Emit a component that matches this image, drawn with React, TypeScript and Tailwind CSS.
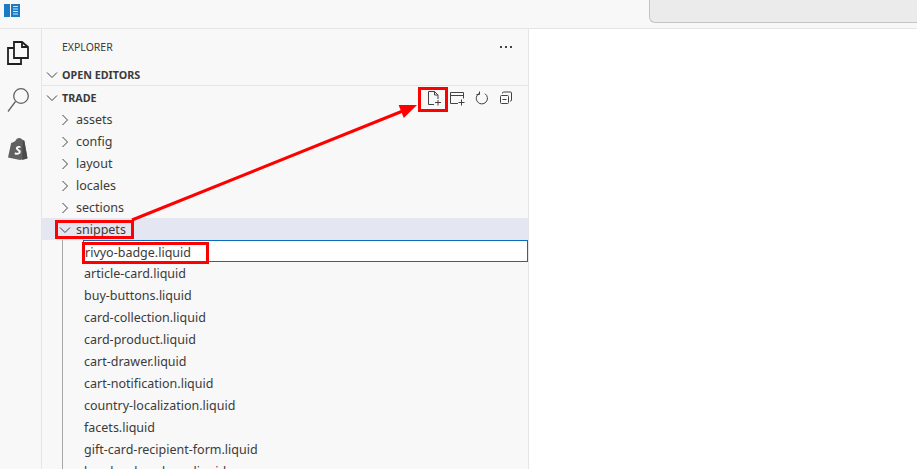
import React from "react";

const font = { fontFamily: '"Noto Sans", "Open Sans", sans-serif' };

function Chevron({ open }: { open?: boolean }) {
  return (
    <svg width="16" height="16" viewBox="0 0 16 16" fill="none" stroke="#424242" strokeWidth="1" className="mt-[1px] shrink-0">
      {open ? <path d="M3 5.500l5 5 5-5" /> : <path d="M5.500 3l5 5-5 5" />}
    </svg>
  );
}

function Folder({ name, open, active }: { name: string; open?: boolean; active?: boolean }) {
  return (
    <div className={`flex h-[22px] items-center pl-[15px] ${active ? "bg-[#e4e6f1]" : ""}`}>
      <Chevron open={open} />
      <span className="ml-[3px] pt-[2px] text-[12.5px] text-[#3b3b3b]">{name}</span>
    </div>
  );
}

function Section({ name, border }: { name: string; border?: boolean }) {
  return (
    <div className={`flex h-[22px] items-center pl-[2px] ${border ? "border-b border-[#e5e5e5]" : ""}`}>
      <Chevron open />
      <span className="ml-[2px] pt-[2px] text-[10.75px] font-bold text-[#3b3b3b]">{name}</span>
    </div>
  );
}

const files = [
  "article-card.liquid",
  "buy-buttons.liquid",
  "card-collection.liquid",
  "card-product.liquid",
  "cart-drawer.liquid",
  "cart-notification.liquid",
  "country-localization.liquid",
  "facets.liquid",
  "gift-card-recipient-form.liquid",
  "header-dropdown.liquid",
];

function Annotations() {
  return (
    <svg className="pointer-events-none absolute left-0 top-0" width="917" height="469" viewBox="0 0 917 469" fill="none">
      <rect x="419.500" y="88.500" width="27" height="22" stroke="#ff0000" strokeWidth="3" />
      <rect x="56.500" y="221.500" width="76" height="16" stroke="#ff0000" strokeWidth="3" />
      <rect x="83.500" y="243.500" width="124" height="19" stroke="#ff0000" strokeWidth="3" />
      <path d="M132 220L404 110.500" stroke="#ff0000" strokeWidth="3" />
      <path d="M417 105L398.600 104.900L403.800 117.900Z" fill="#ff0000" />
    </svg>
  );
}

export default function App() {
  return (
    <div className="relative flex h-[469px] w-[917px] flex-col overflow-hidden bg-white" style={font}>
      <div className="flex h-[29px] shrink-0 items-start border-b border-[#e5e5e5] bg-[#f8f8f8]">
        <svg width="16" height="13" viewBox="0 0 16 13" className="ml-[4px] mt-[4px]">
          <rect x="0" y="0" width="6" height="13" fill="#1a7ac4" />
          <rect x="7" y="0" width="9" height="13" fill="#1a7ac4" />
          <path d="M9 2.500h5M9 5h5M9 7.500h5M9 10h5" stroke="#cfe6f7" strokeWidth="1" />
        </svg>
        <div className="ml-[629px] h-[23px] flex-1 rounded-bl-[6px] border-b border-l border-[#c4c4c4] bg-[#ebebeb]" />
      </div>
      <div className="flex min-h-0 flex-1">
        <div className="flex w-[42px] shrink-0 flex-col items-center border-r border-[#e5e5e5] bg-[#f8f8f8] pt-[12px]">
          <svg width="22" height="24" viewBox="0 0 22 24" fill="none" strokeWidth="1.800" className="-ml-[6px]">
            <path d="M7 1h8l6 5v11H7z" stroke="#1f1f1f" />
            <path d="M15 1v5h6" stroke="#1f1f1f" />
            <path d="M7 7H1v16h13v-6" stroke="#1f1f1f" />
          </svg>
          <svg width="22" height="24" viewBox="0 0 22 24" fill="none" stroke="#616161" strokeWidth="1.300" className="mt-[23px] -ml-[5px]">
            <circle cx="14" cy="8" r="7.300" />
            <path d="M8.500 13.500L1 23.500" />
          </svg>
          <svg width="20" height="23" viewBox="1 0 19 23" preserveAspectRatio="none" className="mt-[25px] -ml-[5px]">
            <path d="M1 20.500L4 6c2-1 3-1 4-2 1-3 4-4 6-2l1 1 1.500 .5 3 17.500-7 2z" fill="#616161" />
            <path d="M15 3.500l1.500 .5 3 17.500-5 1.500z" fill="#4a4a4a" />
            <path d="M13 9.500c-2-1-5 0-4.500 2.200.4 1.600 2.800 1.800 2.600 3.300-.2 1.200-2 1-3.400 .2l-.5 2c2 1 5.500 .8 5.900-2.200.3-2.300-2.800-2.600-2.600-3.700.1-.8 1.400-.8 2.200-.3z" fill="#f8f8f8" />
          </svg>
        </div>
        <div className="flex w-[487px] shrink-0 flex-col border-r border-[#e5e5e5] bg-[#f8f8f8]">
          <div className="flex h-[35px] shrink-0 items-center justify-between pl-[20px] pr-[16px]">
            <span className="pt-[2px] text-[10.5px] text-[#3b3b3b]">EXPLORER</span>
            <svg width="12" height="2" viewBox="0 0 12 2" fill="#424242">
              <rect x="0" y="0" width="2" height="2" />
              <rect x="5" y="0" width="2" height="2" />
              <rect x="10" y="0" width="2" height="2" />
            </svg>
          </div>
          <Section name="OPEN EDITORS" border />
          <div className="relative flex h-[22px] items-center">
            <div className="flex-1"><Section name="TRADE" /></div>
            <div className="absolute left-[384px] top-[4px] flex items-center gap-[8px]">
              <svg width="16" height="16" viewBox="0 0 16 16" fill="none" stroke="#424242">
                <path d="M8 14.500H2.500v-13h6l3.500 3.500v4M8.500 1.500V5H12M12 10v5.500M9 12.500h6" />
              </svg>
              <svg width="16" height="16" viewBox="0 0 16 16" fill="none" stroke="#424242">
                <path d="M8 13.500H.5v-11h13v6M.5 5.500h13M11.500 9.500v6M8.500 12.500h6" />
              </svg>
              <svg width="16" height="16" viewBox="0 0 16 16" fill="none" stroke="#424242">
                <path d="M5 3.500a5.600 5.600 0 1 0 6 .2M5.500 1.500v3h-3" />
              </svg>
              <svg width="16" height="16" viewBox="0 0 16 16" fill="none" stroke="#424242">
                <rect x="2.500" y="5.500" width="8" height="8" rx="1" />
                <path d="M4.500 3.500V3a1 1 0 0 1 1-1h7a1 1 0 0 1 1 1v7a1 1 0 0 1-1 1h-.5M4.500 9.500h4" />
              </svg>
            </div>
          </div>
          <Folder name="assets" />
          <Folder name="config" />
          <Folder name="layout" />
          <Folder name="locales" />
          <Folder name="sections" />
          <Folder name="snippets" open active />
          <div className="relative min-h-0 flex-1 overflow-hidden">
            <div className="absolute bottom-0 left-[20px] top-0 w-px bg-[#a8a8a8]" />
            <div className="ml-[41px] flex h-[22px] items-center border border-[#0a6cbd] bg-white pl-[1px] pt-[4px] text-[12.5px] text-[#3b3b3b]">
              rivyo-badge.liquid
            </div>
            {files.map((f) => (
              <div key={f} className="flex h-[22px] items-center pl-[42px] pt-[2px] text-[12.5px] text-[#3b3b3b]">
                {f}
              </div>
            ))}
          </div>
        </div>
        <div className="flex-1 bg-white" />
      </div>
      <Annotations />
    </div>
  );
}
